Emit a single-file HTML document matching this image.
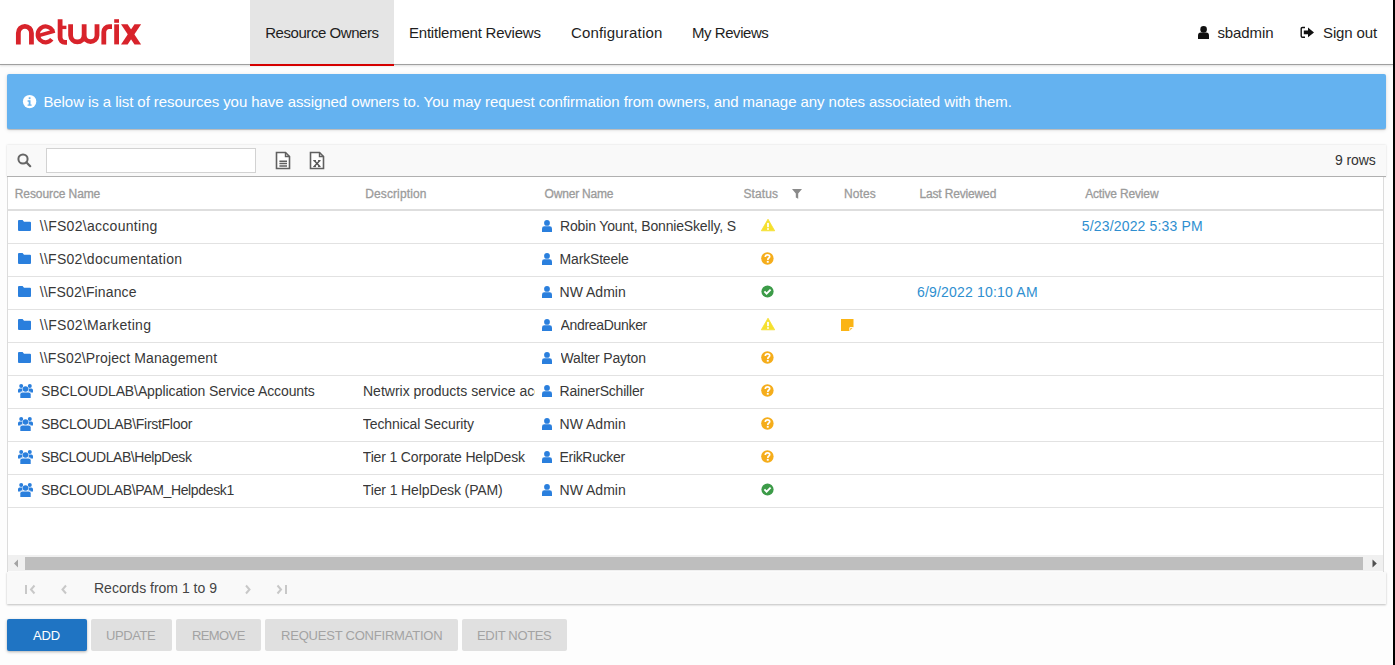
<!DOCTYPE html>
<html><head><meta charset="utf-8">
<style>
*{box-sizing:border-box;margin:0;padding:0}
html,body{width:1395px;height:665px;overflow:hidden;background:#fdfdfd;font-family:"Liberation Sans",sans-serif}
.a{position:absolute;white-space:nowrap}
#hdr{position:absolute;left:0;top:0;width:1395px;height:64px;background:#fff}
#hline{position:absolute;left:0;top:64px;width:1393px;height:1px;background:#a0a0a0;box-shadow:0 1px 2px rgba(0,0,0,.18)}
#tab{position:absolute;left:250px;top:0;width:144px;height:64px;background:#e5e5e5}
#tabred{position:absolute;left:250px;top:64px;width:144px;height:2px;background:#d50000}
#banner{position:absolute;left:7px;top:74px;width:1379px;height:55px;background:#64b2f0;border-radius:2px;box-shadow:0 1px 1px rgba(0,0,0,.22),0 1px 4px rgba(0,0,0,.12)}
#tb{position:absolute;left:7px;top:145px;width:1379px;height:32px;background:#f9f9f9;box-shadow:0 0 2px rgba(0,0,0,.15);border-bottom:1px solid #b0b0b0}
#srch{position:absolute;left:46px;top:148px;width:210px;height:25px;background:#fff;border:1px solid #d2d2d2}
#grid{position:absolute;left:7px;top:177px;width:1377px;height:395px;background:#fff;border-left:1px solid #dcdcdc;border-right:1px solid #dcdcdc}
#hb{position:absolute;left:8px;top:209px;width:1375px;height:2px;background:#dedede}
.rb{position:absolute;left:8px;width:1375px;height:1px;background:#e2e2e2}
#sbtrack{position:absolute;left:8px;top:555px;width:1375px;height:16px;background:#f0f0f0}
#sbthumb{position:absolute;left:25px;top:557px;width:1338px;height:13px;background:#bebebe}
#pg{position:absolute;left:7px;top:572px;width:1379px;height:32px;background:#f9f9f9;box-shadow:0 1px 2px rgba(0,0,0,.25)}
.btn{position:absolute;top:619px;height:32px;border-radius:2px;background:#e0e0e0}
#edge{position:absolute;left:1393px;top:0;width:2px;height:665px;background:#000}
</style></head><body>
<div id="hdr"></div>
<div id="tab"></div>
<div id="hline"></div>
<div id="tabred"></div>
<svg class="a" style="left:0;top:0" width="160" height="60" viewBox="0 0 160 60">
<g fill="none" stroke="#d8232b" stroke-width="4.8">
<path d="M18.35 44.6 V32.95 A6.55 6.55 0 0 1 31.45 32.95 V44.6"/>
<path d="M52.6 30.7 A7.9 7.9 0 1 0 51.8 39.3" stroke-width="4.2"/><path d="M38.8 35.4 L54.8 30.9" stroke-width="3.6"/>
<path d="M60.1 19.3 V37.6 A4.8 4.8 0 0 0 64.9 42.4 H67"/>
<path d="M58 27.4 H66.4" stroke-width="3.4"/>
<path d="M70.6 24.3 V35.4 A6.78 6.78 0 0 0 84.15 35.4 V24.3 M84.15 35.4 A6.43 6.43 0 0 0 97 35.4 V24.3"/>
<path d="M103.8 44.4 V32 A5.3 5.3 0 0 1 109.1 26.7 H112"/>
</g>
<g fill="#d8232b">
<rect x="114.2" y="24.3" width="4.8" height="20.1"/>
<rect x="114.2" y="19.2" width="4.8" height="3.6"/>
<polygon points="121,24.3 127.6,24.3 141.1,44.4 134.5,44.4"/>
<polygon points="134.5,24.3 141.1,24.3 127.6,44.4 121,44.4"/>
</g>
</svg>
<span id="n1" class="a" style="left:265.20px;top:25px;font-size:15px;line-height:15px;color:#1e1e1e;letter-spacing:-0.443px">Resource Owners</span>
<span id="n2" class="a" style="left:409.00px;top:25px;font-size:15px;line-height:15px;color:#1e1e1e;letter-spacing:-0.222px">Entitlement Reviews</span>
<span id="n3" class="a" style="left:571.00px;top:25px;font-size:15px;line-height:15px;color:#1e1e1e;letter-spacing:0.167px">Configuration</span>
<span id="n4" class="a" style="left:692.00px;top:25px;font-size:15px;line-height:15px;color:#1e1e1e;letter-spacing:-0.444px">My Reviews</span>
<svg class="a" style="left:1198px;top:26px" width="11" height="13" viewBox="0 0 11 13"><circle cx="5.6" cy="3.4" r="3.3" fill="#111"/><path d="M0 13 V9.5 Q0 6.6 2.8 6.6 H8.2 Q11 6.6 11 9.5 V13 Z" fill="#111"/></svg>
<span id="n5" class="a" style="left:1217.40px;top:25px;font-size:15px;line-height:15px;color:#1e1e1e;letter-spacing:-0.100px">sbadmin</span>
<svg class="a" style="left:1300px;top:26px" width="15" height="13" viewBox="0 0 15 13"><path d="M5 1.5 H2.5 Q1.2 1.5 1.2 2.8 V10 Q1.2 11.3 2.5 11.3 H5" fill="none" stroke="#111" stroke-width="1.4"/><path d="M3.8 4.6 H8 V1.5 L14 6.4 L8 11.3 V8.2 H3.8 Z" fill="#111"/></svg>
<span id="n6" class="a" style="left:1323.00px;top:25px;font-size:15px;line-height:15px;color:#1e1e1e;letter-spacing:-0.114px">Sign out</span>
<div id="banner"></div>
<svg class="a" style="left:22px;top:94px" width="15" height="15" viewBox="0 0 15 15"><circle cx="7.6" cy="7.6" r="6.7" fill="#fff"/><rect x="6.7" y="3.3" width="1.8" height="1.8" fill="#64b2f0"/><path d="M5.6 6.3 H8.5 V10.4 H9.6 V11.8 H5.6 V10.4 H6.7 V7.7 H5.6 Z" fill="#64b2f0"/></svg>
<span id="bn" class="a" style="left:43.40px;top:94px;font-size:15px;line-height:15px;color:#fff;letter-spacing:-0.067px">Below is a list of resources you have assigned owners to. You may request confirmation from owners, and manage any notes associated with them.</span>
<div id="tb"></div>
<svg class="a" style="left:17px;top:153px" width="15" height="15" viewBox="0 0 15 15"><circle cx="6" cy="6" r="4.6" fill="none" stroke="#666" stroke-width="2"/><path d="M9.3 9.3 L13.2 13.2" stroke="#666" stroke-width="2.2" stroke-linecap="round"/></svg>
<div id="srch"></div>
<svg class="a" style="left:275px;top:151px" width="16" height="19" viewBox="0 0 16 19"><path d="M1.5 1.5 H10.5 L14.5 5.5 V17.5 H1.5 Z" fill="#fff" stroke="#606060" stroke-width="1.6"/><path d="M10.5 1.5 V5.5 H14.5" fill="none" stroke="#606060" stroke-width="1.4"/><path d="M4.4 10.3 H12 M4.4 12.6 H12 M4.4 14.9 H12" stroke="#606060" stroke-width="1.5"/></svg>
<svg class="a" style="left:309px;top:151px" width="16" height="19" viewBox="0 0 16 19"><path d="M1.5 1.5 H10.5 L14.5 5.5 V17.5 H1.5 Z" fill="#fff" stroke="#606060" stroke-width="1.6"/><path d="M10.5 1.5 V5.5 H14.5" fill="none" stroke="#606060" stroke-width="1.4"/><path d="M5.2 9.6 L10.8 15.6 M10.8 9.6 L5.2 15.6" stroke="#555" stroke-width="1.5"/><path d="M4.2 9.6 H7 M9 9.6 H11.6 M4.2 15.6 H7 M9 15.6 H11.6" stroke="#555" stroke-width="1"/></svg>
<span id="rw" class="a" style="left:1335.00px;top:153px;font-size:14px;line-height:14px;color:#333;letter-spacing:-0.080px">9 rows</span>
<div id="grid"></div>
<span id="h1" class="a" style="left:14.80px;top:188px;font-size:12px;line-height:12px;color:#9b9b9b;-webkit-text-stroke:0.3px #9b9b9b;letter-spacing:-0.100px">Resource Name</span><span id="h2" class="a" style="left:365.20px;top:188px;font-size:12px;line-height:12px;color:#9b9b9b;-webkit-text-stroke:0.3px #9b9b9b;letter-spacing:0.120px">Description</span><span id="h3" class="a" style="left:544.60px;top:188px;font-size:12px;line-height:12px;color:#9b9b9b;-webkit-text-stroke:0.3px #9b9b9b;letter-spacing:-0.200px">Owner Name</span><span id="h4" class="a" style="left:743.40px;top:188px;font-size:12px;line-height:12px;color:#9b9b9b;-webkit-text-stroke:0.3px #9b9b9b;letter-spacing:0.120px">Status</span>
<svg class="a" style="left:792px;top:189px" width="10" height="10" viewBox="0 0 10 10"><path d="M0 0 H10 L6.2 4.4 V9.8 L3.8 8.4 V4.4 Z" fill="#8a8a8a"/></svg>
<span id="h5" class="a" style="left:844.00px;top:188px;font-size:12px;line-height:12px;color:#9b9b9b;-webkit-text-stroke:0.3px #9b9b9b;letter-spacing:0.100px">Notes</span><span id="h6" class="a" style="left:919.40px;top:188px;font-size:12px;line-height:12px;color:#9b9b9b;-webkit-text-stroke:0.3px #9b9b9b;letter-spacing:-0.150px">Last Reviewed</span><span id="h7" class="a" style="left:1085.20px;top:188px;font-size:12px;line-height:12px;color:#9b9b9b;-webkit-text-stroke:0.3px #9b9b9b;letter-spacing:-0.167px">Active Review</span>
<div id="hb"></div>
<div class="rb" style="top:243px"></div>
<svg class="a" style="left:18px;top:220px" width="13" height="11" viewBox="0 0 13 11"><path d="M0 1 Q0 0 1 0 H4.6 L6 1.8 H12 Q13 1.8 13 2.8 V10 Q13 11 12 11 H1 Q0 11 0 10 Z" fill="#2a7fdd"/></svg>
<svg class="a" style="left:542px;top:220px" width="10" height="12" viewBox="0 0 10 12"><circle cx="5" cy="2.9" r="2.9" fill="#2a7fdd"/><path d="M0 12 V8.6 Q0 6.2 2.4 6.2 H7.6 Q10 6.2 10 8.6 V12 Z" fill="#2a7fdd"/></svg>
<svg class="a" style="left:760px;top:218px" width="16" height="14" viewBox="0 0 16 14"><path d="M8 1.2 L14.7 12.8 H1.3 Z" fill="#f5e02e" stroke="#f5e02e" stroke-width="0.8" stroke-linejoin="round"/><rect x="7.1" y="4.9" width="1.8" height="4.3" fill="#fff"/><rect x="7.1" y="10.2" width="1.8" height="1.6" fill="#fff"/></svg>
<div class="rb" style="top:276px"></div>
<svg class="a" style="left:18px;top:253px" width="13" height="11" viewBox="0 0 13 11"><path d="M0 1 Q0 0 1 0 H4.6 L6 1.8 H12 Q13 1.8 13 2.8 V10 Q13 11 12 11 H1 Q0 11 0 10 Z" fill="#2a7fdd"/></svg>
<svg class="a" style="left:542px;top:253px" width="10" height="12" viewBox="0 0 10 12"><circle cx="5" cy="2.9" r="2.9" fill="#2a7fdd"/><path d="M0 12 V8.6 Q0 6.2 2.4 6.2 H7.6 Q10 6.2 10 8.6 V12 Z" fill="#2a7fdd"/></svg>
<svg class="a" style="left:761px;top:252px" width="13" height="13" viewBox="0 0 13 13"><circle cx="6.4" cy="6.5" r="6.2" fill="#f5ad1b"/><path d="M4.3 5 Q4.3 2.8 6.5 2.8 Q8.7 2.8 8.7 4.6 Q8.7 5.7 7.5 6.3 Q6.9 6.6 6.9 7.4 V7.9" fill="none" stroke="#fff" stroke-width="1.7"/><rect x="5.8" y="8.9" width="1.9" height="1.8" fill="#fff"/></svg>
<div class="rb" style="top:309px"></div>
<svg class="a" style="left:18px;top:286px" width="13" height="11" viewBox="0 0 13 11"><path d="M0 1 Q0 0 1 0 H4.6 L6 1.8 H12 Q13 1.8 13 2.8 V10 Q13 11 12 11 H1 Q0 11 0 10 Z" fill="#2a7fdd"/></svg>
<svg class="a" style="left:542px;top:286px" width="10" height="12" viewBox="0 0 10 12"><circle cx="5" cy="2.9" r="2.9" fill="#2a7fdd"/><path d="M0 12 V8.6 Q0 6.2 2.4 6.2 H7.6 Q10 6.2 10 8.6 V12 Z" fill="#2a7fdd"/></svg>
<svg class="a" style="left:761px;top:285px" width="13" height="13" viewBox="0 0 13 13"><circle cx="6.5" cy="6.5" r="6.1" fill="#3c9b48"/><path d="M3.4 6.4 L5.6 8.6 L9.6 4.6" fill="none" stroke="#fff" stroke-width="1.9"/></svg>
<div class="rb" style="top:342px"></div>
<svg class="a" style="left:18px;top:319px" width="13" height="11" viewBox="0 0 13 11"><path d="M0 1 Q0 0 1 0 H4.6 L6 1.8 H12 Q13 1.8 13 2.8 V10 Q13 11 12 11 H1 Q0 11 0 10 Z" fill="#2a7fdd"/></svg>
<svg class="a" style="left:542px;top:319px" width="10" height="12" viewBox="0 0 10 12"><circle cx="5" cy="2.9" r="2.9" fill="#2a7fdd"/><path d="M0 12 V8.6 Q0 6.2 2.4 6.2 H7.6 Q10 6.2 10 8.6 V12 Z" fill="#2a7fdd"/></svg>
<svg class="a" style="left:760px;top:317px" width="16" height="14" viewBox="0 0 16 14"><path d="M8 1.2 L14.7 12.8 H1.3 Z" fill="#f5e02e" stroke="#f5e02e" stroke-width="0.8" stroke-linejoin="round"/><rect x="7.1" y="4.9" width="1.8" height="4.3" fill="#fff"/><rect x="7.1" y="10.2" width="1.8" height="1.6" fill="#fff"/></svg>
<svg class="a" style="left:841px;top:319px" width="13" height="12" viewBox="0 0 13 12"><path d="M0 0 H12.5 V8 L8.5 12 H0 Z" fill="#fbb414"/><path d="M8.8 11.8 V8.6 H12.3" fill="none" stroke="#fff" stroke-width="1"/></svg>
<div class="rb" style="top:375px"></div>
<svg class="a" style="left:18px;top:352px" width="13" height="11" viewBox="0 0 13 11"><path d="M0 1 Q0 0 1 0 H4.6 L6 1.8 H12 Q13 1.8 13 2.8 V10 Q13 11 12 11 H1 Q0 11 0 10 Z" fill="#2a7fdd"/></svg>
<svg class="a" style="left:542px;top:352px" width="10" height="12" viewBox="0 0 10 12"><circle cx="5" cy="2.9" r="2.9" fill="#2a7fdd"/><path d="M0 12 V8.6 Q0 6.2 2.4 6.2 H7.6 Q10 6.2 10 8.6 V12 Z" fill="#2a7fdd"/></svg>
<svg class="a" style="left:761px;top:351px" width="13" height="13" viewBox="0 0 13 13"><circle cx="6.4" cy="6.5" r="6.2" fill="#f5ad1b"/><path d="M4.3 5 Q4.3 2.8 6.5 2.8 Q8.7 2.8 8.7 4.6 Q8.7 5.7 7.5 6.3 Q6.9 6.6 6.9 7.4 V7.9" fill="none" stroke="#fff" stroke-width="1.7"/><rect x="5.8" y="8.9" width="1.9" height="1.8" fill="#fff"/></svg>
<div class="rb" style="top:408px"></div>
<svg class="a" style="left:18px;top:384px" width="15" height="14" viewBox="0 0 15 14"><circle cx="3.2" cy="2" r="2" fill="#2a7fdd"/><circle cx="11.8" cy="2" r="2" fill="#2a7fdd"/><path d="M0 8.5 V6.2 Q0 4.6 1.6 4.6 H4.6 Q3.8 6 4.6 7.6 H2.6 V8.5 Z" fill="#2a7fdd"/><path d="M15 8.5 V6.2 Q15 4.6 13.4 4.6 H10.4 Q11.2 6 10.4 7.6 H12.4 V8.5 Z" fill="#2a7fdd"/><circle cx="7.5" cy="5" r="2.8" fill="#2a7fdd"/><path d="M2.3 14 V10.6 Q2.3 8.6 4.3 8.6 H10.7 Q12.7 8.6 12.7 10.6 V14 Z" fill="#2a7fdd"/></svg>
<svg class="a" style="left:542px;top:385px" width="10" height="12" viewBox="0 0 10 12"><circle cx="5" cy="2.9" r="2.9" fill="#2a7fdd"/><path d="M0 12 V8.6 Q0 6.2 2.4 6.2 H7.6 Q10 6.2 10 8.6 V12 Z" fill="#2a7fdd"/></svg>
<svg class="a" style="left:761px;top:384px" width="13" height="13" viewBox="0 0 13 13"><circle cx="6.4" cy="6.5" r="6.2" fill="#f5ad1b"/><path d="M4.3 5 Q4.3 2.8 6.5 2.8 Q8.7 2.8 8.7 4.6 Q8.7 5.7 7.5 6.3 Q6.9 6.6 6.9 7.4 V7.9" fill="none" stroke="#fff" stroke-width="1.7"/><rect x="5.8" y="8.9" width="1.9" height="1.8" fill="#fff"/></svg>
<div class="rb" style="top:441px"></div>
<svg class="a" style="left:18px;top:417px" width="15" height="14" viewBox="0 0 15 14"><circle cx="3.2" cy="2" r="2" fill="#2a7fdd"/><circle cx="11.8" cy="2" r="2" fill="#2a7fdd"/><path d="M0 8.5 V6.2 Q0 4.6 1.6 4.6 H4.6 Q3.8 6 4.6 7.6 H2.6 V8.5 Z" fill="#2a7fdd"/><path d="M15 8.5 V6.2 Q15 4.6 13.4 4.6 H10.4 Q11.2 6 10.4 7.6 H12.4 V8.5 Z" fill="#2a7fdd"/><circle cx="7.5" cy="5" r="2.8" fill="#2a7fdd"/><path d="M2.3 14 V10.6 Q2.3 8.6 4.3 8.6 H10.7 Q12.7 8.6 12.7 10.6 V14 Z" fill="#2a7fdd"/></svg>
<svg class="a" style="left:542px;top:418px" width="10" height="12" viewBox="0 0 10 12"><circle cx="5" cy="2.9" r="2.9" fill="#2a7fdd"/><path d="M0 12 V8.6 Q0 6.2 2.4 6.2 H7.6 Q10 6.2 10 8.6 V12 Z" fill="#2a7fdd"/></svg>
<svg class="a" style="left:761px;top:417px" width="13" height="13" viewBox="0 0 13 13"><circle cx="6.4" cy="6.5" r="6.2" fill="#f5ad1b"/><path d="M4.3 5 Q4.3 2.8 6.5 2.8 Q8.7 2.8 8.7 4.6 Q8.7 5.7 7.5 6.3 Q6.9 6.6 6.9 7.4 V7.9" fill="none" stroke="#fff" stroke-width="1.7"/><rect x="5.8" y="8.9" width="1.9" height="1.8" fill="#fff"/></svg>
<div class="rb" style="top:474px"></div>
<svg class="a" style="left:18px;top:450px" width="15" height="14" viewBox="0 0 15 14"><circle cx="3.2" cy="2" r="2" fill="#2a7fdd"/><circle cx="11.8" cy="2" r="2" fill="#2a7fdd"/><path d="M0 8.5 V6.2 Q0 4.6 1.6 4.6 H4.6 Q3.8 6 4.6 7.6 H2.6 V8.5 Z" fill="#2a7fdd"/><path d="M15 8.5 V6.2 Q15 4.6 13.4 4.6 H10.4 Q11.2 6 10.4 7.6 H12.4 V8.5 Z" fill="#2a7fdd"/><circle cx="7.5" cy="5" r="2.8" fill="#2a7fdd"/><path d="M2.3 14 V10.6 Q2.3 8.6 4.3 8.6 H10.7 Q12.7 8.6 12.7 10.6 V14 Z" fill="#2a7fdd"/></svg>
<svg class="a" style="left:542px;top:451px" width="10" height="12" viewBox="0 0 10 12"><circle cx="5" cy="2.9" r="2.9" fill="#2a7fdd"/><path d="M0 12 V8.6 Q0 6.2 2.4 6.2 H7.6 Q10 6.2 10 8.6 V12 Z" fill="#2a7fdd"/></svg>
<svg class="a" style="left:761px;top:450px" width="13" height="13" viewBox="0 0 13 13"><circle cx="6.4" cy="6.5" r="6.2" fill="#f5ad1b"/><path d="M4.3 5 Q4.3 2.8 6.5 2.8 Q8.7 2.8 8.7 4.6 Q8.7 5.7 7.5 6.3 Q6.9 6.6 6.9 7.4 V7.9" fill="none" stroke="#fff" stroke-width="1.7"/><rect x="5.8" y="8.9" width="1.9" height="1.8" fill="#fff"/></svg>
<div class="rb" style="top:507px"></div>
<svg class="a" style="left:18px;top:483px" width="15" height="14" viewBox="0 0 15 14"><circle cx="3.2" cy="2" r="2" fill="#2a7fdd"/><circle cx="11.8" cy="2" r="2" fill="#2a7fdd"/><path d="M0 8.5 V6.2 Q0 4.6 1.6 4.6 H4.6 Q3.8 6 4.6 7.6 H2.6 V8.5 Z" fill="#2a7fdd"/><path d="M15 8.5 V6.2 Q15 4.6 13.4 4.6 H10.4 Q11.2 6 10.4 7.6 H12.4 V8.5 Z" fill="#2a7fdd"/><circle cx="7.5" cy="5" r="2.8" fill="#2a7fdd"/><path d="M2.3 14 V10.6 Q2.3 8.6 4.3 8.6 H10.7 Q12.7 8.6 12.7 10.6 V14 Z" fill="#2a7fdd"/></svg>
<svg class="a" style="left:542px;top:484px" width="10" height="12" viewBox="0 0 10 12"><circle cx="5" cy="2.9" r="2.9" fill="#2a7fdd"/><path d="M0 12 V8.6 Q0 6.2 2.4 6.2 H7.6 Q10 6.2 10 8.6 V12 Z" fill="#2a7fdd"/></svg>
<svg class="a" style="left:761px;top:483px" width="13" height="13" viewBox="0 0 13 13"><circle cx="6.5" cy="6.5" r="6.1" fill="#3c9b48"/><path d="M3.4 6.4 L5.6 8.6 L9.6 4.6" fill="none" stroke="#fff" stroke-width="1.9"/></svg>
<span id="r0a" class="a" style="left:39.80px;top:219px;font-size:14px;line-height:14px;color:#383838;letter-spacing:0.287px">\\FS02\accounting</span>
<span id="r0c" class="a" style="left:560.00px;top:219px;font-size:14px;line-height:14px;color:#383838;letter-spacing:-0.160px;width:176.00px;overflow:hidden;height:18px">Robin Yount, BonnieSkelly, Scott Robinson</span>
<span id="r0e" class="a" style="left:1081.80px;top:219px;font-size:14px;line-height:14px;color:#2f8fd0;letter-spacing:0.162px">5/23/2022 5:33 PM</span>
<span id="r1a" class="a" style="left:39.80px;top:252px;font-size:14px;line-height:14px;color:#383838;letter-spacing:0.274px">\\FS02\documentation</span>
<span id="r1c" class="a" style="left:559.60px;top:252px;font-size:14px;line-height:14px;color:#383838;letter-spacing:-0.178px;width:176.40px;overflow:hidden;height:18px">MarkSteele</span>
<span id="r2a" class="a" style="left:39.80px;top:285px;font-size:14px;line-height:14px;color:#383838;letter-spacing:0.138px">\\FS02\Finance</span>
<span id="r2c" class="a" style="left:559.60px;top:285px;font-size:14px;line-height:14px;color:#383838;width:176.40px;overflow:hidden;height:18px">NW Admin</span>
<span id="r2d" class="a" style="left:917.00px;top:285px;font-size:14px;line-height:14px;color:#2f8fd0;letter-spacing:0.188px">6/9/2022 10:10 AM</span>
<span id="r3a" class="a" style="left:39.80px;top:318px;font-size:14px;line-height:14px;color:#383838;letter-spacing:0.307px">\\FS02\Marketing</span>
<span id="r3c" class="a" style="left:560.60px;top:318px;font-size:14px;line-height:14px;color:#383838;letter-spacing:-0.327px;width:175.40px;overflow:hidden;height:18px">AndreaDunker</span>
<span id="r4a" class="a" style="left:39.80px;top:351px;font-size:14px;line-height:14px;color:#383838;letter-spacing:0.125px">\\FS02\Project Management</span>
<span id="r4c" class="a" style="left:560.60px;top:351px;font-size:14px;line-height:14px;color:#383838;letter-spacing:-0.167px;width:175.40px;overflow:hidden;height:18px">Walter Payton</span>
<span id="r5a" class="a" style="left:41.00px;top:384px;font-size:14px;line-height:14px;color:#383838;letter-spacing:-0.105px">SBCLOUDLAB\Application Service Accounts</span>
<span id="r5b" class="a" style="left:363.00px;top:384px;font-size:14px;line-height:14px;color:#383838;width:172.00px;overflow:hidden;height:18px">Netwrix products service accounts</span>
<span id="r5c" class="a" style="left:559.60px;top:384px;font-size:14px;line-height:14px;color:#383838;letter-spacing:-0.200px;width:176.40px;overflow:hidden;height:18px">RainerSchiller</span>
<span id="r6a" class="a" style="left:41.00px;top:417px;font-size:14px;line-height:14px;color:#383838;letter-spacing:-0.290px">SBCLOUDLAB\FirstFloor</span>
<span id="r6b" class="a" style="left:362.80px;top:417px;font-size:14px;line-height:14px;color:#383838;letter-spacing:-0.094px;width:172.20px;overflow:hidden;height:18px">Technical Security</span>
<span id="r6c" class="a" style="left:559.60px;top:417px;font-size:14px;line-height:14px;color:#383838;width:176.40px;overflow:hidden;height:18px">NW Admin</span>
<span id="r7a" class="a" style="left:41.00px;top:450px;font-size:14px;line-height:14px;color:#383838;letter-spacing:-0.433px">SBCLOUDLAB\HelpDesk</span>
<span id="r7b" class="a" style="left:362.80px;top:450px;font-size:14px;line-height:14px;color:#383838;letter-spacing:-0.158px;width:172.20px;overflow:hidden;height:18px">Tier 1 Corporate HelpDesk</span>
<span id="r7c" class="a" style="left:559.60px;top:450px;font-size:14px;line-height:14px;color:#383838;letter-spacing:-0.333px;width:176.40px;overflow:hidden;height:18px">ErikRucker</span>
<span id="r8a" class="a" style="left:41.00px;top:483px;font-size:14px;line-height:14px;color:#383838;letter-spacing:-0.348px">SBCLOUDLAB\PAM_Helpdesk1</span>
<span id="r8b" class="a" style="left:362.80px;top:483px;font-size:14px;line-height:14px;color:#383838;letter-spacing:-0.120px;width:172.20px;overflow:hidden;height:18px">Tier 1 HelpDesk (PAM)</span>
<span id="r8c" class="a" style="left:559.60px;top:483px;font-size:14px;line-height:14px;color:#383838;width:176.40px;overflow:hidden;height:18px">NW Admin</span>
<div id="sbtrack"></div>
<div id="sbthumb"></div>
<svg class="a" style="left:13px;top:559px" width="6" height="9" viewBox="0 0 6 9"><path d="M5 0.5 V8.5 L1 4.5 Z" fill="#a3a3a3"/></svg>
<svg class="a" style="left:1371px;top:559px" width="7" height="9" viewBox="0 0 7 9"><path d="M1.5 0.5 V8.5 L5.8 4.5 Z" fill="#505050"/></svg>
<div id="pg"></div>
<svg class="a" style="left:24px;top:584px" width="13" height="11" viewBox="0 0 13 11"><rect x="1" y="1" width="2" height="9" fill="#c8c8c8"/><path d="M10.5 1.5 L7 5.5 L10.5 9.5" fill="none" stroke="#c8c8c8" stroke-width="2"/></svg>
<svg class="a" style="left:59px;top:584px" width="10" height="11" viewBox="0 0 10 11"><path d="M7 1.5 L3.5 5.5 L7 9.5" fill="none" stroke="#c8c8c8" stroke-width="2"/></svg>
<span id="rec" class="a" style="left:94.00px;top:581px;font-size:14px;line-height:14px;color:#444">Records from 1 to 9</span>
<svg class="a" style="left:243px;top:584px" width="10" height="11" viewBox="0 0 10 11"><path d="M3 1.5 L6.5 5.5 L3 9.5" fill="none" stroke="#c8c8c8" stroke-width="2"/></svg>
<svg class="a" style="left:275px;top:584px" width="13" height="11" viewBox="0 0 13 11"><path d="M2.5 1.5 L6 5.5 L2.5 9.5" fill="none" stroke="#c8c8c8" stroke-width="2"/><rect x="10" y="1" width="2" height="9" fill="#c8c8c8"/></svg>
<div class="btn" style="left:7px;width:80px;background:#1f74c3;box-shadow:0 1px 3px rgba(0,0,0,.3)"></div>
<div class="btn" style="left:91px;width:81px"></div>
<div class="btn" style="left:176px;width:85px"></div>
<div class="btn" style="left:265px;width:193px"></div>
<div class="btn" style="left:462px;width:105px"></div>
<span id="b1" class="a" style="left:33.00px;top:629px;font-size:13px;line-height:13px;color:#fff;letter-spacing:-0.200px">ADD</span><span id="b2" class="a" style="left:106.00px;top:629px;font-size:13px;line-height:13px;color:#a3a3a3;letter-spacing:-0.400px">UPDATE</span><span id="b3" class="a" style="left:192.00px;top:629px;font-size:13px;line-height:13px;color:#a3a3a3;letter-spacing:-0.600px">REMOVE</span><span id="b4" class="a" style="left:281.00px;top:629px;font-size:13px;line-height:13px;color:#a3a3a3;letter-spacing:-0.211px">REQUEST CONFIRMATION</span><span id="b5" class="a" style="left:477.00px;top:629px;font-size:13px;line-height:13px;color:#a3a3a3;letter-spacing:-0.333px">EDIT NOTES</span>
<div id="edge"></div>
</body></html>
